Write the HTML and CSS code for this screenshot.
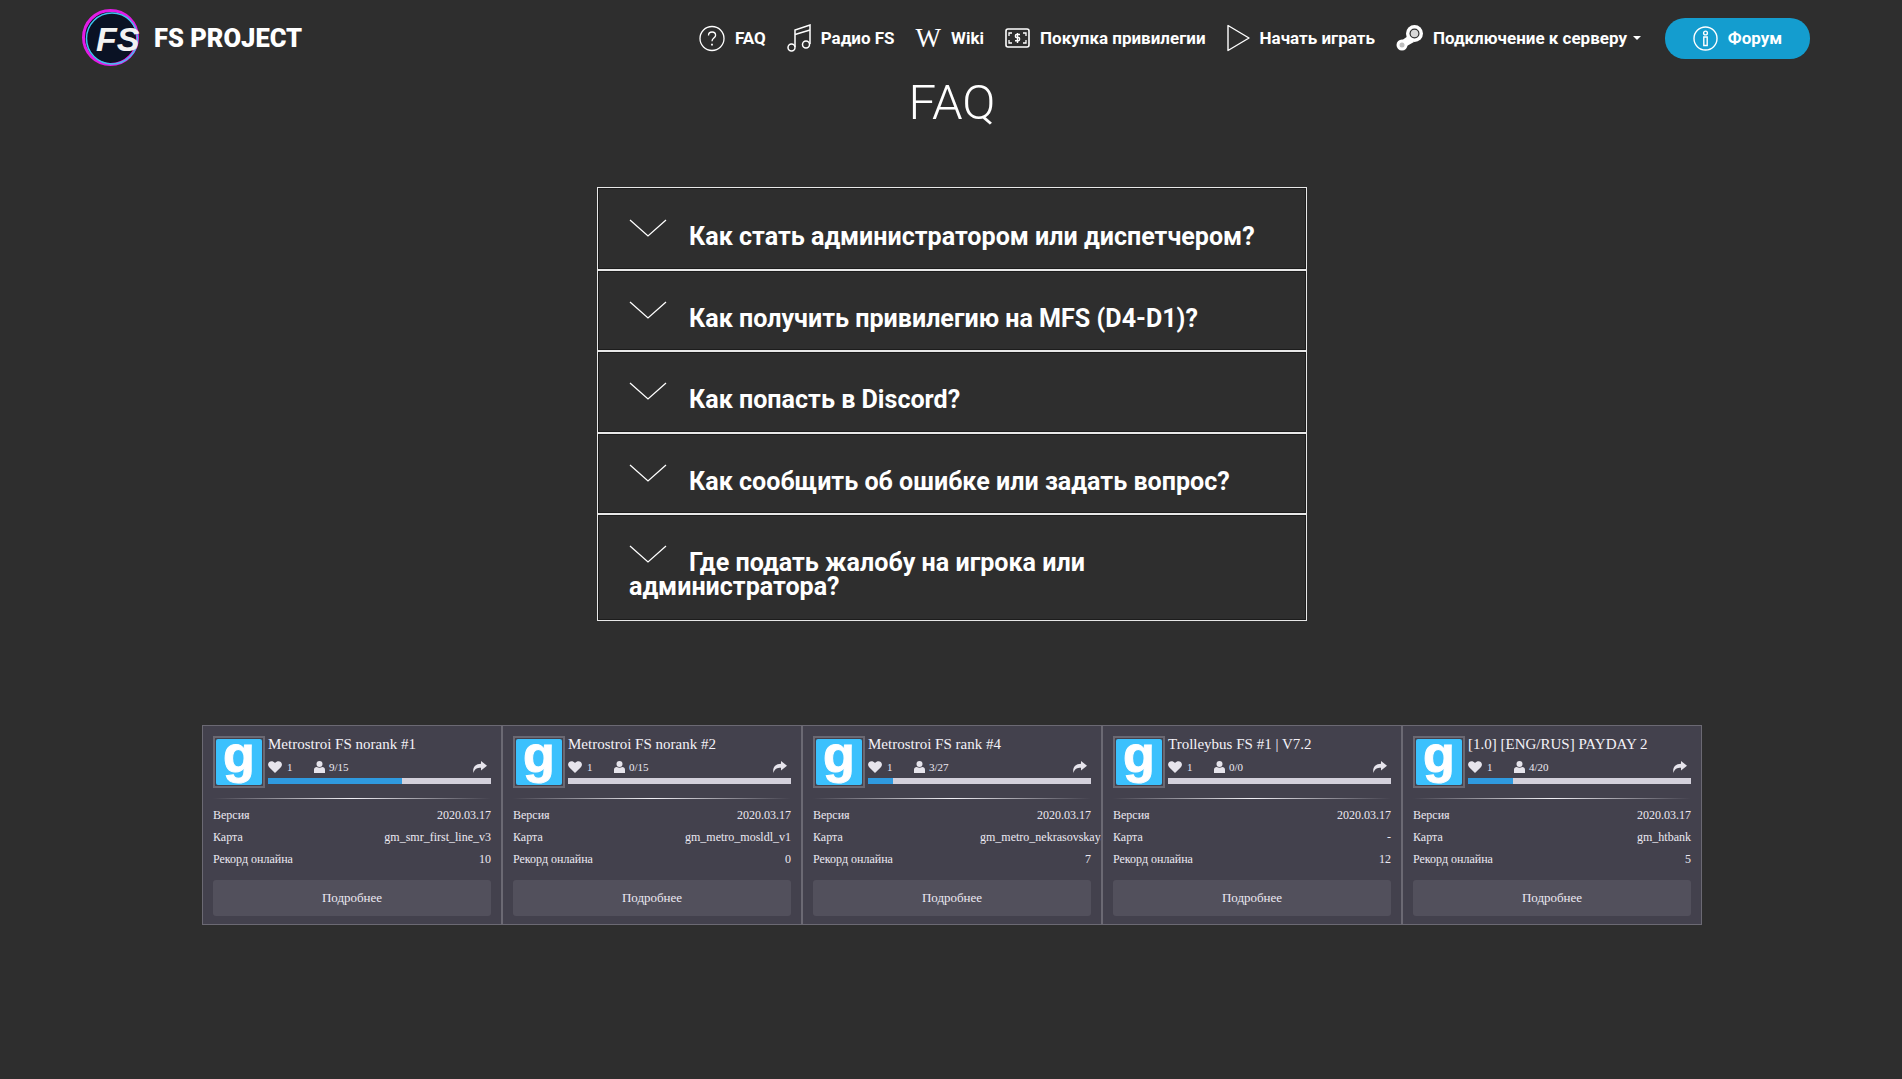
FILE: index.html
```html
<!DOCTYPE html>
<html lang="en">
<head>
  <meta charset="UTF-8" />
  <meta name="viewport" content="width=device-width, initial-scale=1.0"/>
  <title>FS Project - FAQ</title>
  <link rel="stylesheet" href="styles.css">
</head>
<body>
  <svg class="defs" width="0" height="0">
    <symbol id="chev" viewBox="0 0 38 18"><path d="M1 1 L19 17 L37 1" fill="none" stroke="#fff" stroke-width="1.3"/></symbol>
    <symbol id="heart" viewBox="0 0 14 12"><path d="M7 12 1.400 6.600C-.4 4.800-.3 2.400 1.200 1 2.800-.3 5.300-.1 7 2 8.700-.1 11.200-.3 12.800 1c1.500 1.400 1.600 3.800-.2 5.600Z" fill="#e6e4ec"/></symbol>
    <symbol id="user" viewBox="0 0 11 12"><circle cx="5.500" cy="3" r="3" fill="#e6e4ec"/><path d="M0 12V8.800C0 7 1.200 6 2.700 6c1.700 1 3.900 1 5.600 0C9.800 6 11 7 11 8.800V12Z" fill="#e6e4ec"/></symbol>
    <symbol id="share" viewBox="0 0 15 12"><path d="M9 0 15 4.700 9 9.500V6.700C5 6.700 2.500 7.700 1.500 12 .2 7.200 3 3 9 2.800Z" fill="#e6e4ec"/></symbol>
  </svg>

  <header class="topbar">
    <a class="brand">
      <svg class="brand-logo" viewBox="0 0 60 58" width="60" height="58">
        <circle cx="30" cy="29" r="26.500" fill="#0a1224"/>
        <circle cx="29.500" cy="28.500" r="27" fill="none" stroke="#e21be6" stroke-width="3"/>
        <circle cx="31" cy="29.500" r="25.500" fill="none" stroke="#3fc4ee" stroke-width="1.500"/>
        <text x="15" y="42" class="brand-fs">FS</text>
      </svg>
      <span>FS PROJECT</span>
    </a>
    <nav class="menu">
      <a class="menu-item">
        <svg width="26" height="27" viewBox="0 0 26 27" fill="none" stroke="#fff" stroke-width="1.300"><circle cx="13" cy="13.500" r="12"/><path d="M9.500 10.500c0-2.200 1.600-3.500 3.600-3.500s3.500 1.300 3.500 3.200c0 2.800-3.600 2.900-3.600 6"/><path d="M13 18.700v1.800" stroke-width="1.800"/></svg>
        FAQ
      </a>
      <a class="menu-item">
        <svg width="24" height="28" viewBox="0 0 24 28" fill="none" stroke="#fff" stroke-width="1.500"><circle cx="4.500" cy="23.500" r="3.500"/><circle cx="19" cy="20.500" r="3.500"/><path d="M8 23V6L23 1V20"/><path d="M8 10.500 23 6"/></svg>
        Радио FS
      </a>
      <a class="menu-item">
        <span class="wiki-w">W</span>
        Wiki
      </a>
      <a class="menu-item">
        <svg width="25" height="20" viewBox="0 0 25 20" fill="none" stroke="#fff" stroke-width="1.600"><rect x="1" y="1" width="23" height="18" rx="2"/><path d="M4 8V5h3M21 8V5h-3M4 12v3h3M21 12v3h-3" stroke-width="1.300"/><path d="M15 6.500h-3.500c-1.500 0-1.500 3 0 3h2c1.500 0 1.500 3.200 0 3.200H10M12.500 5v10" stroke-width="1.400"/></svg>
        Покупка привилегии
      </a>
      <a class="menu-item">
        <svg width="23" height="28" viewBox="0 0 23 28" fill="none" stroke="#fff" stroke-width="1.400" stroke-linejoin="round"><path d="M1 1.500V26.500L22 14Z"/></svg>
        Начать играть
      </a>
      <a class="menu-item">
        <svg width="27" height="26" viewBox="0 0 27 26"><path d="M12 11 5 16l4 6 9-5Z" fill="#fff"/><circle cx="18.500" cy="8.500" r="8.500" fill="#fff"/><circle cx="18.500" cy="8.500" r="5" fill="#2e2e2e"/><circle cx="18.500" cy="8.500" r="3.800" fill="#d8d8d8"/><circle cx="6" cy="20" r="5.500" fill="#fff"/><circle cx="6" cy="20" r="2.500" fill="#bdbdbd"/></svg>
        Подключение к серверу<i class="caret"></i>
      </a>
      <a class="forum-btn">
        <svg width="25" height="25" viewBox="0 0 25 25" fill="none" stroke="#fff" stroke-width="1.400"><circle cx="12.500" cy="12.500" r="11.500"/><circle cx="12.500" cy="7" r="1.900"/><path d="M10.800 11h3.400v8.500h-3.400Z"/></svg>
        Форум
      </a>
    </nav>
  </header>

  <main class="content">
    <h1 class="page-title">FAQ</h1>

    <section class="faq">
      <div class="faq-item"><svg class="chev"><use href="#chev"/></svg>Как стать администратором или диспетчером?</div>
      <div class="faq-item"><svg class="chev"><use href="#chev"/></svg>Как получить привилегию на MFS (D4-D1)?</div>
      <div class="faq-item"><svg class="chev"><use href="#chev"/></svg>Как попасть в Discord?</div>
      <div class="faq-item"><svg class="chev"><use href="#chev"/></svg>Как сообщить об ошибке или задать вопрос?</div>
      <div class="faq-item"><svg class="chev"><use href="#chev"/></svg>Где подать жалобу на игрока или администратора?</div>
    </section>

    <section class="servers">
      <article class="server">
        <div class="server-head">
          <div class="gm-icon"><span>g</span></div>
          <div class="server-info">
            <div class="server-name">Metrostroi FS norank #1</div>
            <div class="server-stats">
              <svg class="ic-heart"><use href="#heart"/></svg><span class="likes">1</span>
              <svg class="ic-user"><use href="#user"/></svg><span>9/15</span>
              <svg class="ic-share"><use href="#share"/></svg>
            </div>
            <div class="bar"><div class="bar-fill" style="width:60%"></div></div>
          </div>
        </div>
        <div class="divider"></div>
        <div class="row"><span>Версия</span><span>2020.03.17</span></div>
        <div class="row"><span>Карта</span><span>gm_smr_first_line_v3</span></div>
        <div class="row"><span>Рекорд онлайна</span><span>10</span></div>
        <a class="more">Подробнее</a>
      </article>

      <article class="server">
        <div class="server-head">
          <div class="gm-icon"><span>g</span></div>
          <div class="server-info">
            <div class="server-name">Metrostroi FS norank #2</div>
            <div class="server-stats">
              <svg class="ic-heart"><use href="#heart"/></svg><span class="likes">1</span>
              <svg class="ic-user"><use href="#user"/></svg><span>0/15</span>
              <svg class="ic-share"><use href="#share"/></svg>
            </div>
            <div class="bar"><div class="bar-fill" style="width:0%"></div></div>
          </div>
        </div>
        <div class="divider"></div>
        <div class="row"><span>Версия</span><span>2020.03.17</span></div>
        <div class="row"><span>Карта</span><span>gm_metro_mosldl_v1</span></div>
        <div class="row"><span>Рекорд онлайна</span><span>0</span></div>
        <a class="more">Подробнее</a>
      </article>

      <article class="server">
        <div class="server-head">
          <div class="gm-icon"><span>g</span></div>
          <div class="server-info">
            <div class="server-name">Metrostroi FS rank #4</div>
            <div class="server-stats">
              <svg class="ic-heart"><use href="#heart"/></svg><span class="likes">1</span>
              <svg class="ic-user"><use href="#user"/></svg><span>3/27</span>
              <svg class="ic-share"><use href="#share"/></svg>
            </div>
            <div class="bar"><div class="bar-fill" style="width:11%"></div></div>
          </div>
        </div>
        <div class="divider"></div>
        <div class="row"><span>Версия</span><span>2020.03.17</span></div>
        <div class="row"><span>Карта</span><span class="map-long">gm_metro_nekrasovskaya</span></div>
        <div class="row"><span>Рекорд онлайна</span><span>7</span></div>
        <a class="more">Подробнее</a>
      </article>

      <article class="server">
        <div class="server-head">
          <div class="gm-icon"><span>g</span></div>
          <div class="server-info">
            <div class="server-name">Trolleybus FS #1 | V7.2</div>
            <div class="server-stats">
              <svg class="ic-heart"><use href="#heart"/></svg><span class="likes">1</span>
              <svg class="ic-user"><use href="#user"/></svg><span>0/0</span>
              <svg class="ic-share"><use href="#share"/></svg>
            </div>
            <div class="bar"><div class="bar-fill" style="width:0%"></div></div>
          </div>
        </div>
        <div class="divider"></div>
        <div class="row"><span>Версия</span><span>2020.03.17</span></div>
        <div class="row"><span>Карта</span><span>-</span></div>
        <div class="row"><span>Рекорд онлайна</span><span>12</span></div>
        <a class="more">Подробнее</a>
      </article>

      <article class="server">
        <div class="server-head">
          <div class="gm-icon"><span>g</span></div>
          <div class="server-info">
            <div class="server-name">[1.0] [ENG/RUS] PAYDAY 2</div>
            <div class="server-stats">
              <svg class="ic-heart"><use href="#heart"/></svg><span class="likes">1</span>
              <svg class="ic-user"><use href="#user"/></svg><span>4/20</span>
              <svg class="ic-share"><use href="#share"/></svg>
            </div>
            <div class="bar"><div class="bar-fill" style="width:20%"></div></div>
          </div>
        </div>
        <div class="divider"></div>
        <div class="row"><span>Версия</span><span>2020.03.17</span></div>
        <div class="row"><span>Карта</span><span>gm_htbank</span></div>
        <div class="row"><span>Рекорд онлайна</span><span>5</span></div>
        <a class="more">Подробнее</a>
      </article>
    </section>
  </main>
</body>
</html>
```

FILE: styles.css
```css
body {
  margin: 0;
  height: 1079px;
  overflow: hidden;
  background: #2e2e2e;
  color: #fff;
  font-family: Roboto, sans-serif;
}
.defs {
  position: absolute;
}

/* top bar */
.topbar {
  display: flex;
  justify-content: space-between;
  align-items: center;
  height: 76px;
  padding: 0 92px 0 81px;
}
.brand {
  display: flex;
  align-items: center;
  gap: 13px;
  font-size: 25.500px;
  font-weight: 900;
}
.brand-fs {
  font-family: "Liberation Sans", sans-serif;
  font-style: italic;
  font-size: 34px;
  fill: #f2f2f2;
}
.menu {
  display: flex;
  align-items: center;
  gap: 21px;
  font-size: 17px;
  font-weight: 700;
}
.menu-item {
  display: flex;
  align-items: center;
  gap: 10px;
}
.wiki-w {
  font-family: "Liberation Serif", serif;
  font-size: 27px;
  line-height: 28px;
  font-weight: 400;
}
.caret {
  margin-left: -4px;
  border-top: 4px solid #fff;
  border-left: 4.500px solid transparent;
  border-right: 4.500px solid transparent;
}
.forum-btn {
  display: flex;
  align-items: center;
  justify-content: center;
  gap: 10px;
  width: 145px;
  height: 41px;
  margin-left: 3px;
  border-radius: 20px;
  background: #149dcf;
}

.content {
  padding-left: 2px;
}
.page-title {
  margin: 0;
  height: 111px;
  text-align: center;
  font-size: 49px;
  font-weight: 300;
  line-height: 54px;
}

/* accordion */
.faq {
  width: 710px;
  margin: 0 auto;
}
.faq-item {
  box-sizing: border-box;
  height: 81.500px;
  padding: 30px 25px 10px 31px;
  border: 1px solid #e8e8e8;
  box-shadow: inset 0 0 0 1px #1c1c1c;
  font-size: 25.100px;
  font-weight: 700;
  line-height: 24px;
}
.faq-item:first-child {
  height: 82.500px;
  padding-top: 31px;
}
.faq-item:last-child {
  height: 107px;
}
.chev {
  width: 38px;
  height: 18px;
  margin-right: 22px;
  vertical-align: 8px;
}

/* server cards */
.servers {
  display: grid;
  grid-template-columns: repeat(5, 300px);
  justify-content: center;
  margin-top: 104px;
  font-family: "Liberation Serif", serif;
  font-size: 12px;
  color: #ece9f2;
}
.server {
  box-sizing: border-box;
  height: 200px;
  padding: 10px 10px 0;
  overflow: hidden;
  background: #43414d;
  border: 1px solid #6b6973;
}
.server-head {
  display: flex;
  gap: 3px;
}
.gm-icon {
  box-sizing: border-box;
  flex: none;
  width: 52px;
  height: 52px;
  padding: 1px;
  border: 2px solid #6b6973;
  font-family: "Liberation Sans", sans-serif;
  font-size: 52px;
  font-weight: 700;
  color: #fff;
}
.gm-icon span {
  display: block;
  height: 100%;
  background: #3bc1fd;
  border-radius: 2px;
  text-align: center;
  line-height: 30px;
  -webkit-text-stroke: 1px #fff;
}
.server-info {
  flex: 1;
  min-width: 0;
}
.server-name {
  margin-top: -1px;
  font-size: 15px;
  line-height: 18px;
  color: #f4f2f8;
}
.server-stats {
  display: flex;
  align-items: center;
  height: 18px;
  margin-top: 5px;
  font-size: 11px;
}
.ic-heart {
  width: 14px;
  height: 12px;
  margin-right: 5px;
}
.ic-user {
  width: 11px;
  height: 12px;
  margin-right: 4px;
}
.ic-share {
  width: 15px;
  height: 12px;
  margin-left: auto;
  margin-right: 4px;
}
.likes {
  width: 27px;
}
.bar {
  height: 6px;
  margin-top: 2px;
  background: #d3d0db;
}
.bar-fill {
  height: 100%;
  background: #2f9ae0;
}
.divider {
  height: 1px;
  margin: 10px 0 5px;
  background: linear-gradient(to right, transparent, #f2f0f6 50%, transparent);
}
.row {
  display: flex;
  justify-content: space-between;
  height: 22px;
  line-height: 22px;
  white-space: nowrap;
}
.map-long {
  margin-right: -15px;
}
.more {
  display: block;
  height: 36px;
  margin-top: 10px;
  border-radius: 3px;
  background: #52505c;
  text-align: center;
  font-size: 13px;
  line-height: 36px;
}
```
